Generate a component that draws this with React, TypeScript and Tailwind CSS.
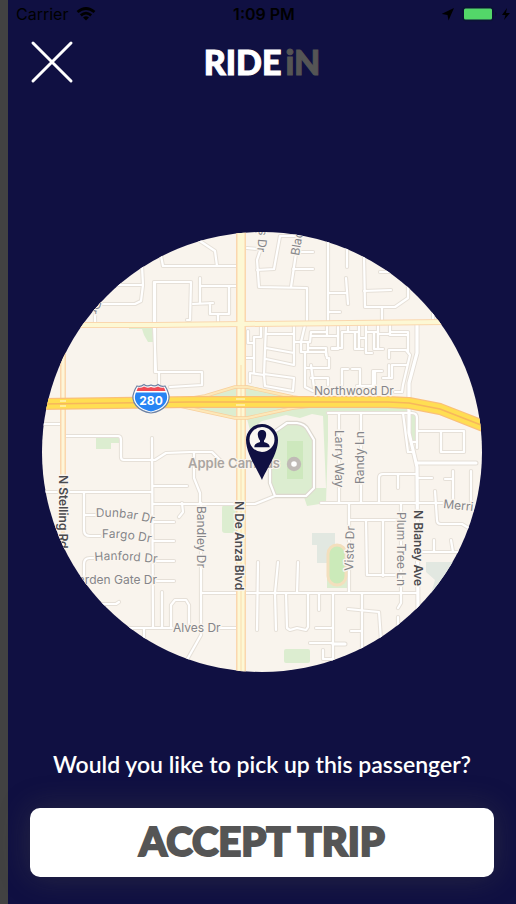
import React from "react";

const minorRoads = [
  "M161 256L163 266H236",
  "M142 266L143 285L141 301L135 304H100M116 285H143M95 323V308",
  "M155 372V282H191L190 320H187M154 282V325L156 372H202V385L170 387M159 372V387",
  "M200 241L215 251L217 266",
  "M200 278V303M200 286H236M193 304L213 303M210 303V314H229V286M218 314V322",
  "M247 248L257 249M262 245L257 260L259 287L307 288V322M257 270L274 269L280 236H297",
  "M298 240L291 287M293 269H313M298 252H313",
  "M328 240V321M328 293H347M328 312H340",
  "M248 331V343H254M261 327V337H254V373M245 358H254M250 382V373L264 375",
  "M266 326L264 375L265 386L293 391L294 378L264 374M266 334H294M294 326V365L266 359M266 348L294 353",
  "M305 325L301 342V352H326L327 358H329V368H305M294 342H310L311 332H327M305 352V387L313 391H330",
  "M311 365L314 388M311 378H328V385M308 342V352M308 348H326V355M311 336H338M327 326V336M338 327V349H332",
  "M347 246V267M346 278L348 304",
  "M364 255L365 307H395L408 298V283M364 291L391 290M380 272H402M382 307V322M433 314V322",
  "M342 332V348H332M342 332H358M348 325V332M355 332V349H363M359 326V349M359 338H366M366 324V353H372",
  "M366 332H378M374 332V349H383M378 326V349M378 334H390M390 323V335H408M391 332H408V352",
  "M389 358V350H406L410 355L403 385L402 392H395M342 385V369H348M352 369H360V385M357 386H375M373 385V371H382M375 371V386M383 378H392V365H407M389 365V378",
  "M44 424H62M65 436H118Q121 436 121 440V457Q121 460 124 460H155L166 453L190 452H212L222 462",
  "M152 438L153 628M153 486H187M153 504H237L255 504L275 496M182 503L183 512L179 517",
  "M194 452V478L200 493V503M201 503V635L188 658",
  "M44 492H152M84 492V530Q84 536 90 536H100M84 515H97M84 578V564Q84 558 90 558H97",
  "M153 522H174M153 541H174M153 561H174M153 581H174M162 592V627M126 628H172M144 628V641M100 604H116L119 602",
  "M171 627V605L175 600H186L189 605V624M218 628H236",
  "M201 593H418M258 562L257 630M278 562L275 593L276 630M298 562L297 593",
  "M286 593L287 628L290 630L297 628L306 630L308 627V593M319 593V610M333 593V662M316 628H333M310 643H333M323 650V659H333",
  "M321 503H443M339 413V503M361 413V503M328 413H412Q417 413 417 418V448M403 413L408 452H413",
  "M379 503V478Q379 474 383 474H417M398 474V488M418 478H432M445 479H453M453 471V503M471 471V508",
  "M435 491L437 520Q437 524 441 524H462L480 535M417 431H464V452H441V431M413 442H417",
  "M349 503V593M349 520H397M366 520L367 575H397M383 520V576M401 503V603L398 608",
  "M420 552H460M434 540V552M451 540L453 552",
  "M362 593V650M348 609L379 612L381 640M351 631H362M398 617V628",
];

type LabelProps = {
  x: number;
  y: number;
  angle?: number;
  strong?: boolean;
  end?: boolean;
  children: string;
};

function Label({ x, y, angle = 0, strong, end, children }: LabelProps) {
  return (
    <text
      transform={`translate(${x} ${y}) rotate(${angle})`}
      textAnchor={end ? "end" : "start"}
      fontSize="12"
      fontWeight={strong ? 600 : 400}
      fill={strong ? "#4b4b4e" : "#858589"}
      stroke="#faf5ee"
      strokeWidth="3"
      strokeLinejoin="round"
      paintOrder="stroke"
    >
      {children}
    </text>
  );
}

function CurvedLabel({ id, d, children }: { id: string; d: string; children: string }) {
  return (
    <>
      <path id={id} d={d} fill="none" />
      <text fontSize="12" fill="#858589" stroke="#faf5ee" strokeWidth="3" paintOrder="stroke">
        <textPath href={`#${id}`}>{children}</textPath>
      </text>
    </>
  );
}

function PickupMap() {
  return (
    <svg
      viewBox="42 232 440 440"
      role="img"
      aria-label="Map of the pickup location"
      className="block aspect-square w-full rounded-full bg-[#f9f4ed] font-['Inter','Liberation_Sans',sans-serif]"
    >
      <g fill="#dcedd0">
        <path d="M129 327H153V342H148L144 335L142 329H129Z" />
        <path d="M96 437H120V443H111V449H96Z" />
        <path d="M200 397L233 387L247 385L300 398ZM190 407H300L247 418L235 418Z" />
        <path d="M247 419L293 408H409V413H328V440L326 503L307 506L304 497L314 488H326L323 416L312 414L300 418L286 415L262 421L250 430Z" />
        <path d="M407 413L415 414V442L411 440Z" />
        <rect x="222" y="505" width="16" height="28" rx="3" />
        <rect x="284" y="649" width="26" height="14" rx="2" />
        <rect x="327" y="550" width="21" height="38" />
      </g>
      <path d="M312 533H335V545H333V563H317V545H312ZM426 562H475L430 597L435 580L426 572Z" fill="#e2e8e1" />

      <g fill="none" strokeLinejoin="round" strokeLinecap="round">
        <g stroke="#e6e0d8" strokeWidth="4.2">
          {minorRoads.map((d) => (
            <path key={d} d={d} />
          ))}
        </g>
        <path
          d="M287 423H297Q305 424 308 430L314 440V488L306 496H275L270 483V440Q271 433 277 430Z"
          fill="#dcedd0"
          stroke="#ddd8cf"
          strokeWidth="4.4"
        />
        <path d="M417 323V353L409 383V433L417 467L418 612M417 463H476M333 644L345 644" stroke="#e4ded6" strokeWidth="5" />
        <g stroke="#ffffff" strokeWidth="2.2">
          {minorRoads.map((d) => (
            <path key={d} d={d} />
          ))}
          <path d="M287 423H297Q305 424 308 430L314 440V488L306 496H275L270 483V440Q271 433 277 430Z" />
        </g>
        <path d="M417 323V353L409 383V433L417 467L418 612" stroke="#ffffff" strokeWidth="3.2" />
        <path d="M417 463H476M333 644L345 644" stroke="#ffffff" strokeWidth="3" />
      </g>

      <rect x="287" y="441" width="16" height="38" fill="#cde8bd" />
      <rect x="328" y="545" width="18" height="40" rx="9" fill="#cbeab9" stroke="#f3dfbd" strokeWidth="3" />

      <g fill="none" strokeLinejoin="round">
        <path d="M63 320V480M78 325L155 325L243 324L445 322" stroke="#fad7ae" strokeWidth="6" />
        <path d="M63 480V560" stroke="#fbe4c6" strokeWidth="4" />
        <path d="M241 225V675" stroke="#fad7ae" strokeWidth="10" />
        <path d="M78 325L155 325L243 324L445 322" stroke="#fdf8d4" strokeWidth="4" />
        <path d="M63 320V480" stroke="#fdf6d8" strokeWidth="3" />
        <path d="M241 225V675" stroke="#fdf8d4" strokeWidth="7" />
        <path d="M241 365V675" stroke="#fadcae" strokeWidth="1" />
        <path d="M180 400L205 396L235 387H247L293 397L315 400M180 406L235 418H247L293 408L320 405" stroke="#f8cf9c" strokeWidth="3.4" />
        <path d="M180 400L205 396L235 387H247L293 397L315 400M180 406L235 418H247L293 408L320 405" stroke="#fde8b8" strokeWidth="2.2" />
        <path d="M40 404L190 402H388L409 403L440 409L486 427" stroke="#fac078" strokeWidth="12" />
        <path d="M40 404L190 402H388L409 403L440 409L486 427" stroke="#ffde52" strokeWidth="9.6" />
        <path d="M40 404L190 402H388L409 403L440 409L486 427" stroke="#f7b75c" strokeWidth="1.6" />
        <path d="M236 399H245M236 405H245M60 401H66M60 406H66" stroke="#fff3b3" strokeWidth="1.6" />
      </g>

      <Label x={259} y={229} angle={95}>s Dr</Label>
      <Label x={299} y={256} angle={-80}>Blac</Label>
      <Label x={93} y={300} angle={105}>Dr</Label>
      <Label x={314} y={395}>Northwood Dr</Label>
      <CurvedLabel id="dunbar" d="M96 517Q128 515 165 527">Dunbar Dr</CurvedLabel>
      <CurvedLabel id="fargo" d="M102 538Q130 537 165 546">Fargo Dr</CurvedLabel>
      <CurvedLabel id="hanford" d="M95 561Q125 558 170 565">Hanford Dr</CurvedLabel>
      <Label x={157} y={584} end>Garden Gate Dr</Label>
      <Label x={173} y={632}>Alves Dr</Label>
      <Label x={197} y={506} angle={90}>Bandley Dr</Label>
      <Label x={335} y={430} angle={90}>Larry Way</Label>
      <Label x={364} y={484} angle={-90}>Randy Ln</Label>
      <Label x={353} y={571} angle={-88}>Vista Dr</Label>
      <Label x={397} y={512} angle={90}>Plum Tree Ln</Label>
      <Label x={443} y={508} angle={6}>Merri</Label>
      <Label x={59} y={475} angle={90} strong>N Stelling Rd</Label>
      <Label x={235} y={501} angle={90} strong>N De Anza Blvd</Label>
      <Label x={414} y={510} angle={90} strong>N Blaney Ave</Label>
      <text x="188" y="468" fontSize="13" fontWeight="600" fill="#aaa5a1" stroke="#faf5ee" strokeWidth="2" paintOrder="stroke">
        Apple Campus
      </text>
      <circle cx="294" cy="464" r="5" fill="#ffffff" stroke="#c0bab6" strokeWidth="4.4" />

      <path
        d="M137 386Q141 387 144 384.500Q147 387 151 385Q155 387 158 384.500Q161 387 165 386Q167 389 168 392C172 402 164 411 151 413C138 411 130 402 134 392Q135 389 137 386Z"
        fill="#ffffff"
        stroke="#6f83a4"
        strokeWidth="1.200"
      />
      <path d="M136.500 391L138 387.500Q141 388.500 144 386.500Q147 388.500 151 387Q155 388.500 158 386.500Q161 388.500 164 387.500L165.500 391Z" fill="#f04b55" />
      <path d="M136 392.500H166C170 401 163 409 151 411.500C139 409 132 401 136 392.500Z" fill="#2684f4" />
      <text x="151" y="405" textAnchor="middle" fontSize="12" fontWeight="700" fill="#ffffff">
        280
      </text>

      <path d="M262 480C258 470 246 454 246 440A16 16 0 0 1 278 440C278 454 266 470 262 480Z" fill="#101042" />
      <circle cx="262" cy="439.500" r="12.500" fill="#faf7f2" />
      <path
        d="M262 430C258.600 430 257.400 432.500 257.900 435.500C258.200 438 259.200 439.500 260 440.500V442C257 443.300 254.500 443.500 254.300 447.300H269.700C269.500 443.500 267 443.300 264 442V440.500C264.800 439.500 265.800 438 266.100 435.500C266.600 432.500 265.400 430 262 430Z"
        fill="#101042"
      />
    </svg>
  );
}

function StatusBar() {
  return (
    <div className="grid h-7 grid-cols-3 items-center pr-1 pl-2 font-['Inter','Liberation_Sans',sans-serif] text-base text-black">
      <div className="flex items-center gap-2">
        <span>Carrier</span>
        <svg viewBox="0 0 20 14" className="h-[14px] w-5" aria-hidden="true">
          <g fill="none" stroke="currentColor" strokeWidth="2.800">
            <path d="M1.500 5Q10-2 18.500 5" />
            <path d="M4.800 8.300Q10 4 15.200 8.300" />
          </g>
          <path d="M7 10.500Q10 8 13 10.500L10 13.500Z" fill="currentColor" />
        </svg>
      </div>
      <span className="text-center font-semibold">1:09 PM</span>
      <div className="flex items-center justify-end">
        <svg viewBox="0 0 70 16" className="h-4 w-[70px]" aria-hidden="true">
          <path d="M12 2L-0.500 8L5.500 9L6.500 14.500Z" fill="currentColor" />
          <rect x="21" y="1.500" width="30" height="13" rx="3" fill="none" stroke="#0b1433" strokeWidth="1.500" />
          <rect x="22" y="2.500" width="28" height="11" rx="1.500" fill="#53d769" />
          <path d="M53.500 6Q55.500 8 53.500 10Z" fill="#0b0b28" />
          <path d="M65 2L60 9H63.500L62 14L68 7H64Z" fill="currentColor" />
        </svg>
      </div>
    </div>
  );
}

export default function App() {
  return (
    <div className="flex min-h-screen flex-col border-l-8 border-[#424242] bg-[#101042]">
      <StatusBar />
      <header className="grid grid-cols-3 items-center px-5 pt-3">
        <button type="button" aria-label="Close" className="w-12 text-white">
          <svg viewBox="0 0 48 44" className="block h-11 w-12" aria-hidden="true">
            <path d="M5 3L43 41M43 3L5 41" stroke="currentColor" strokeWidth="3" strokeLinecap="round" />
          </svg>
        </button>
        <h1 className="text-center font-['Lato',sans-serif] text-[34px] leading-11 font-black whitespace-nowrap text-white [-webkit-text-stroke:1px_currentColor]">
          RIDE<span className="ml-1 text-[#555555]">iN</span>
        </h1>
      </header>
      <main className="flex grow flex-col justify-end px-[22px] pb-[27px]">
        <div className="px-3">
          <PickupMap />
        </div>
        <p className="mt-[76px] text-center font-['Lato',sans-serif] text-[23px] leading-8 font-semibold text-white">
          Would you like to pick up this passenger?
        </p>
        <button
          type="button"
          className="mt-7 h-[69px] rounded-[10px] bg-white pb-1 font-['Lato',sans-serif] text-[40px] leading-10 font-black text-[#555555] shadow-[0_0_30px_rgba(85,85,70,0.35)] [-webkit-text-stroke:2px_currentColor]"
        >
          ACCEPT TRIP
        </button>
      </main>
    </div>
  );
}
